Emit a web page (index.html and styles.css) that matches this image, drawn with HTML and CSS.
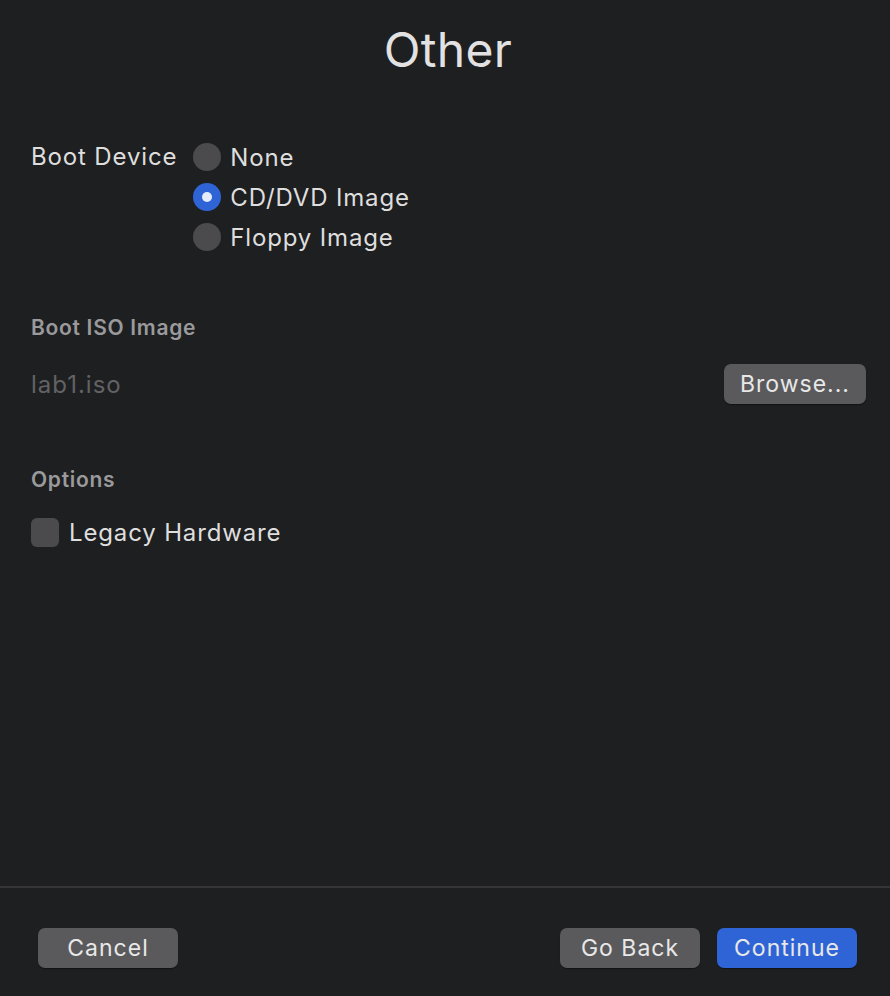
FILE: index.html
```html
<!DOCTYPE html>
<html>
<head>
<meta charset="utf-8">
<link rel="stylesheet" href="styles.css">
</head>
<body>
<div class="window">
  <h1 class="title">Other</h1>
  <div class="content">
    <div class="boot-row">
      <div class="field-label">Boot Device</div>
      <div class="radio-group">
        <div class="radio-item"><span class="radio"></span><span>None</span></div>
        <div class="radio-item"><span class="radio checked"></span><span>CD/DVD Image</span></div>
        <div class="radio-item"><span class="radio"></span><span>Floppy Image</span></div>
      </div>
    </div>
    <div class="section-title iso-title">Boot ISO Image</div>
    <div class="iso-row">
      <span class="iso-name">lab1.iso</span>
      <button class="btn browse">Browse...</button>
    </div>
    <div class="section-title options-title">Options</div>
    <div class="check-item"><span class="checkbox"></span><span>Legacy Hardware</span></div>
  </div>
  <div class="footer">
    <button class="btn wide">Cancel</button>
    <div class="footer-right">
      <button class="btn wide">Go Back</button>
      <button class="btn wide primary">Continue</button>
    </div>
  </div>
</div>
</body>
</html>
```
FILE: styles.css
```css
* { box-sizing: border-box; }
html, body { margin: 0; padding: 0; background: #1e1f21; }
body {
  font-family: Inter, "Noto Sans", "Liberation Sans", sans-serif;
  color: #dedede;
  letter-spacing: 0.85px;
}
.window {
  width: 890px;
  height: 996px;
  display: flex;
  flex-direction: column;
  background: #1e1f21;
}
.title {
  margin: 0;
  padding-top: 22px;
  padding-left: 6px;
  height: 80px;
  text-align: center;
  font-size: 48px;
  font-weight: 400;
  line-height: 56px;
  letter-spacing: 0.3px;
  color: #e2e2e2;
}
.content {
  flex: 1;
  padding: 57px 24px 0 31px;
}
.boot-row {
  display: flex;
  gap: 16px;
  font-size: 24px;
}
.field-label { line-height: 40px; }
.radio-group { display: flex; flex-direction: column; }
.radio-item {
  display: flex;
  align-items: center;
  gap: 9px;
  height: 40px;
}
.radio {
  width: 28px;
  height: 28px;
  border-radius: 50%;
  background: #4b4b4d;
  display: flex;
  align-items: center;
  justify-content: center;
}
.radio.checked { background: #2f64d6; }
.radio.checked::after {
  content: "";
  width: 10px;
  height: 10px;
  border-radius: 50%;
  background: #e6ecfa;
}
.section-title {
  font-size: 21px;
  font-weight: 600;
  color: #9a9a9c;
  line-height: 24px;
  letter-spacing: 0.7px;
}
.iso-title { margin-top: 59px; }
.iso-row {
  display: flex;
  justify-content: space-between;
  align-items: center;
  margin-top: 24px;
}
.iso-name { font-size: 24px; color: #626264; letter-spacing: 1px; }
.btn {
  font-family: inherit;
  font-size: 23px;
  letter-spacing: 1px;
  color: #e8e8e8;
  background: #5a5a5c;
  border: none;
  border-radius: 7px;
  height: 40px;
  padding: 0 16px;
  box-shadow: 0 1px 1px rgba(0,0,0,0.4);
}
.browse { width: 142px; padding: 0; }
.options-title { margin-top: 64px; }
.check-item {
  display: flex;
  align-items: center;
  gap: 10px;
  font-size: 24px;
  margin-top: 26px;
}
.checkbox {
  width: 28px;
  height: 29px;
  border-radius: 6px;
  background: #4b4b4d;
}
.footer {
  height: 110px;
  border-top: 2px solid #353537;
  display: flex;
  justify-content: space-between;
  align-items: flex-start;
  padding: 40px 33px 0 38px;
}
.footer-right { display: flex; gap: 17px; }
.btn.wide { width: 140px; padding: 0; }
.btn.primary { background: #2f64d6; }
```
